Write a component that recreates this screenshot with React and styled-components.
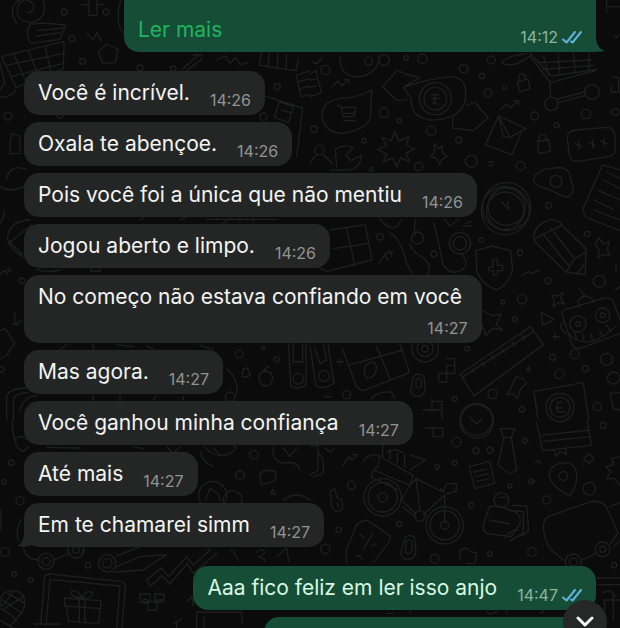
import React from 'react';
import styled, { createGlobalStyle, css } from 'styled-components';

const GlobalStyle = createGlobalStyle`
  * {
    box-sizing: border-box;
  }

  body {
    margin: 0;
    background-color: #0b0b0b;
    font-family: Inter, 'Liberation Sans', sans-serif;
  }
`;

const Screen = styled.main`
  position: relative;
  display: flex;
  flex-direction: column;
  height: 100vh;
  overflow: hidden;
  background-color: #0b0b0b;
`;

const WallpaperArt = styled.svg`
  position: absolute;
  inset: 0;
  width: 100%;
  height: 100%;
  fill: none;
  stroke: #1e1f1f;
  stroke-width: 4;
  stroke-linecap: round;
  stroke-linejoin: round;
`;

const MessageList = styled.ol`
  position: relative;
  flex: 1;
  display: flex;
  flex-direction: column;
  align-items: flex-start;
  gap: 7px;
  margin: 0;
  padding: 0 24px;
  list-style: none;
`;

const outgoing = css`
  align-self: flex-end;
  max-width: calc(100% - 100px);
  background-color: #154d37;
  color: #d8f8e3;
`;

const Bubble = styled.li`
  position: relative;
  flex-shrink: 0;
  display: flex;
  flex-wrap: wrap;
  align-items: flex-end;
  gap: 4px 20px;
  max-width: 80%;
  padding: 8px 14px 5px;
  border-radius: 15px;
  background-color: #242626;
  color: #f3f4f4;
  ${({ $out }) => $out && outgoing}
  ${({ $groupEnd }) => $groupEnd && 'margin-bottom: 12px;'}
`;

// long message whose beginning is scrolled out of view
const CutTopBubble = styled(Bubble)`
  width: 100%;
  padding-top: 16px;
  border-radius: 0 0 0 15px;
`;

const CutBottomBubble = styled(Bubble)`
  width: 58%;
  min-height: 44px;
`;

const Text = styled.span`
  padding-bottom: 3px;
  font-size: 21px;
  line-height: 28px;
`;

const ReadMore = styled.button`
  margin: 0;
  padding: 0 0 3px;
  border: 0;
  background: none;
  color: #21b45f;
  font-family: inherit;
  font-size: 21px;
  line-height: 28px;
  cursor: pointer;
`;

const Meta = styled.span`
  display: flex;
  align-items: center;
  gap: 4px;
  margin-left: auto;
  color: ${({ $out }) => ($out ? '#8db5a1' : '#929494')};
  font-size: 16px;
  line-height: 20px;
`;

const Ticks = styled.svg`
  width: 20px;
  height: 14px;
  fill: none;
  stroke: #62b4dc;
  stroke-width: 2;
  stroke-linecap: round;
  stroke-linejoin: round;
`;

const Tail = styled.svg`
  position: absolute;
  bottom: 0;
  width: 18px;
  height: 16px;
  ${({ $out }) => ($out ? 'right: -9px; fill: #154d37;' : 'left: -7px; fill: #242626;')}
`;

const ScrollButton = styled.button`
  position: absolute;
  right: 13px;
  bottom: -16px;
  display: flex;
  justify-content: center;
  align-items: center;
  width: 44px;
  height: 44px;
  padding: 0;
  border: 0;
  border-radius: 50%;
  background-color: #262727;
  cursor: pointer;
`;

const Chevron = styled.svg`
  width: 20px;
  height: 12px;
  fill: none;
  stroke: #f5f5f5;
  stroke-width: 3;
  stroke-linecap: round;
  stroke-linejoin: round;
`;

const messages = [
  { text: 'Você é incrível.', time: '14:26' },
  { text: 'Oxala te abençoe.', time: '14:26' },
  { text: 'Pois você foi a única que não mentiu', time: '14:26' },
  { text: 'Jogou aberto e limpo.', time: '14:26' },
  { text: 'No começo não estava confiando em você', time: '14:27' },
  { text: 'Mas agora.', time: '14:27' },
  { text: 'Você ganhou minha confiança', time: '14:27' },
  { text: 'Até mais', time: '14:27' },
  { text: 'Em te chamarei simm', time: '14:27', last: true },
];

// The wallpaper is six tiles, each drawn at three times its size.
// dots: [cx, cy, r]
const tiles = [
  {
    x: 0,
    y: 0,
    dots: [[193, 36, 9], [318, 36, 9], [248, 184, 9], [24, 348, 12], [420, 204, 9], [520, 206, 8], [832, 260, 9], [790, 350, 11], [180, 346, 9], [216, 116, 9]],
    lines: [
      'M50 70Q20 20 60 0M130 0Q145 60 90 68Q40 60 55 15Q75 -15 100 12Q105 38 80 38',
      'M245 14h22v-18M267 14v32h24v-46M291 14h20',
      'M92 72Q72 100 92 130L180 118L198 76Q140 66 92 72M110 92L190 84M110 108L184 98',
      'M5 170L48 262L190 206L192 124L5 170M40 160L80 250M85 150L118 236M135 138L154 222M18 196L192 160M34 230L190 190',
      'M0 190L14 250L0 270M48 270Q20 300 0 290',
      'M295 155L320 132L354 148L346 188L308 190Z',
      'M545 210L596 164M556 216L606 176M580 165h26',
      'M650 180L676 168L690 190L708 172L720 194L742 188',
      'M784 158L778 196L888 212L896 176M808 160L804 198M834 160L832 204M860 164L858 208',
      'M888 226L930 212M888 226L904 290L930 284M894 246L930 236M900 266L930 258',
      'M800 290L908 324L890 470M838 306L880 320L866 368L824 352ZM844 330L872 338',
      'M36 400L60 410V460L30 462V424ZM20 536Q30 490 80 508M0 560Q30 580 70 560',
      'M262 100L280 120L290 98L304 122',
      'M362 0Q340 80 380 110',
    ],
  },
  {
    x: 310,
    y: 0,
    dots: [[46, 210, 14], [176, 184, 12], [222, 180, 16], [288, 174, 7], [337, 176, 14], [461, 206, 13], [516, 228, 8], [544, 180, 12], [534, 278, 12], [584, 262, 6], [222, 338, 14], [268, 362, 7], [674, 348, 12], [740, 376, 8], [828, 342, 14], [162, 422, 7], [364, 392, 14], [446, 420, 9], [484, 484, 18], [326, 500, 12], [632, 498, 13], [184, 508, 6], [716, 616, 9], [12, 388, 10], [376, 296, 48], [376, 296, 34], [846, 276, 22], [724, 312, 20], [738, 544, 18], [28, 450, 14], [590, 620, 72], [590, 620, 56], [916, 336, 10]],
    lines: [
      'M90 168Q88 234 150 230Q206 220 208 168M10 186Q20 200 36 172',
      'M0 222L18 212L34 278L0 290M0 240L16 238M0 262L18 258',
      'M66 260L84 242L94 258L114 238M102 238H116V250',
      'M185 270L182 344Q180 386 100 400Q44 400 36 350Q34 304 90 296Q150 292 185 270Z',
      'M82 316L94 320L100 350H132L138 322H98M102 362H136M104 340H132',
      'M280 262L330 232L286 222L262 210L218 260L262 302L290 298M280 262L304 296Q300 352 360 360Q440 362 464 310Q480 230 420 230Q360 236 280 262',
      'M428 352V384L490 392L535 354L494 306L472 316M366 284H388M366 296H388M368 308L384 312M374 284V310',
      'M575 188Q590 200 624 190L660 168L720 248L856 212M575 188Q590 168 650 160M660 160L724 228L862 208M700 166L716 226M744 162L750 222M790 160L796 216M838 160L836 208M684 188L844 180M700 208L850 196M720 252L722 292M744 308L826 286M740 298L822 276',
      'M622 246L654 236L660 266L628 276ZM628 242Q622 220 638 222Q648 224 646 236',
      'M572 330L590 312L602 324L624 304M610 302H626V316',
      'M566 348L526 434L606 464L632 402M566 348L648 386L600 412L566 348M566 348L580 410L600 412',
      'M682 424L716 420L722 454L686 460ZM688 422Q684 402 698 404Q710 404 708 420',
      'M772 418Q770 394 794 390L890 382Q912 382 914 404L916 446Q916 468 894 470L806 484Q780 486 778 462ZM794 430L816 440M806 422V448M836 426L856 436M848 420V444M872 422L892 432M882 414V440',
      'M254 394L266 424L296 410L288 436L314 446L288 460L298 484L272 474L260 500L248 474L220 486L230 462L202 448L230 436L216 412L244 422Z',
      'M372 432L386 446L396 438L398 460L412 470L396 478L390 494L378 474L362 470L374 458Z',
      'M40 464L68 490M76 450Q96 430 130 442L108 466L122 482L154 466Q152 504 116 510H62M76 450L80 500M0 488L20 464',
      'M674 530Q688 506 724 506Q760 496 776 516Q784 540 790 570Q780 600 752 586Q716 566 690 560Q664 550 674 530Z',
      'M930 510L878 494L818 628M890 516L930 536M880 540L930 566M866 572L930 600M852 600L910 628',
      'M536 486H550M536 496H550M890 0V40M890 20H930M912 108L920 112L926 106M904 260V276H926V232H908',
      'M574 606L598 626M594 604V628',
    ],
  },
  {
    x: 0,
    y: 210,
    dots: [[28, 180, 5], [66, 212, 8], [718, 432, 12], [830, 448, 8], [790, 414, 5], [895, 506, 16], [4, 478, 8], [690, 560, 14]],
    lines: [
      'M0 40Q14 20 12 0M90 30Q30 30 22 84Q30 120 70 140M95 44L30 96L66 132',
      'M0 190L14 182L24 194',
      'M44 310V342L66 332M38 344H56',
      'M0 362L16 356L44 400L18 438L0 446',
      'M110 178Q140 190 180 180M272 176V184H300V176M420 30L430 24M620 28H830M670 40L690 24M720 36V26M760 36V26M540 30L560 20',
      'M200 404L180 420M278 404L282 420M350 404L400 410M440 408L460 418M600 406L640 418',
      'M20 630V560Q24 536 80 534M40 630V570Q44 550 84 548M60 600Q70 560 110 556M280 556V570M360 556V572M470 556L460 570M550 560V568',
      'M726 500L730 476L742 474L752 494Q738 504 726 500M790 484Q774 490 778 512Q788 532 800 528Q818 522 818 500Q812 482 790 484Q796 472 806 470',
      'M866 400L872 528Q890 540 918 526V402M880 404V456H908V404',
      'M680 476Q720 510 708 560',
    ],
  },
  {
    x: 310,
    y: 210,
    dots: [[210, 80, 10], [372, 132, 9], [450, 100, 32], [450, 100, 20], [514, 90, 7], [630, 128, 8], [832, 72, 8], [868, 214, 18], [714, 212, 9], [578, 276, 6], [636, 268, 14], [614, 328, 7], [728, 442, 9], [748, 492, 14], [826, 476, 9], [548, 552, 14], [636, 598, 8], [890, 448, 18], [910, 504, 18], [862, 590, 12], [794, 432, 14], [472, 416, 7], [345, 416, 40], [345, 416, 24], [345, 416, 10], [110, 554, 12], [434, 566, 7], [42, 498, 16], [750, 592, 42], [750, 592, 30], [500, 628, 48], [804, 342, 24], [878, 316, 22], [804, 342, 7], [878, 316, 7], [322, 84, 18], [586, 2, 72], [586, 2, 56]],
    lines: [
      'M60 60L166 44L186 150L50 184M70 116L176 100M110 54L134 166M20 170L50 184',
      'M206 160L224 136L234 150M222 132L250 124M238 118L246 140',
      'M208 24Q250 80 274 30M240 70Q270 80 290 160L306 192M318 26Q310 60 316 76M300 100Q300 120 340 144Q370 170 350 196M372 40Q380 70 398 160Q420 200 456 180Q480 160 456 134M404 26L420 48L446 28M460 48H484M468 40L484 34',
      'M498 122L546 108L602 122L608 180Q590 230 560 240Q510 220 500 180ZM536 172H548V148H562V166H578V182H564V196H550V182H536Z',
      'M672 72Q680 40 724 28Q748 30 756 46L828 116L826 194L768 186L674 94ZM700 72L776 168M722 54L794 146M768 186L794 146L828 126M672 90L700 72L756 46M800 192L826 160',
      'M636 196L656 184L664 190L690 180',
      'M866 84L882 102L898 94L892 116L900 136L880 134L864 142L868 120L856 106Z',
      'M726 256L742 258L760 246L752 266L764 282L744 278L730 290L732 272Z',
      'M694 306L732 328L698 346Z',
      'M520 302L546 318L574 312L558 342L578 360L548 354L528 376L516 346',
      'M818 0L828 22L930 62M850 0L930 30M918 162V184M930 230L918 238',
      'M756 312Q750 300 776 296L884 264Q906 262 912 280L930 330M756 312L786 404Q796 420 816 414L930 370M806 290Q800 260 828 258Q846 260 850 276M808 236L824 256M776 370Q830 430 916 350M792 364L800 384M816 370L822 390M842 370L848 390M868 360L878 378M890 346L902 364M758 340Q742 350 768 370',
      'M450 492L662 350L700 404L492 558ZM456 502L672 364M486 478L494 488M516 458L524 468M546 438L554 448M576 418L584 428M606 396L614 408M636 376L644 388',
      'M600 540L618 500L638 506L650 520L632 536L622 566L608 550L590 554ZM650 480L656 470L660 484Z',
      'M672 544L820 518L836 628M672 544L684 628M758 578Q742 570 742 590V606H764M736 594H756',
      'M96 414L140 530Q150 544 166 540L294 490Q300 480 290 464L270 404M112 466L280 420M200 410L240 506M170 504Q150 470 184 456Q206 460 196 490Q186 506 170 504',
      'M0 408L18 528Q40 540 72 520L54 402M14 414L30 460L50 450L40 404M80 456H100M90 446V466',
      'M410 446H434V490H386V516H410V466M386 490H410M412 466H434M366 574H396V628M366 574V600H396M340 600H366',
      'M310 500Q326 484 342 500L346 540Q340 564 314 558Q296 550 304 534ZM318 508Q328 500 334 510V530Q324 540 318 528Z',
      'M184 566Q200 544 244 546L254 566M44 560H66',
      'M900 550L930 548M900 550L910 596L930 600M728 380H750M736 372V388',
    ],
  },
  {
    x: 0,
    y: 420,
    dots: [[34, 128, 8], [12, 186, 7], [60, 242, 12], [14, 396, 13], [42, 462, 7], [92, 480, 7], [264, 436, 8], [138, 424, 24], [138, 424, 12], [228, 390, 24], [228, 390, 10], [322, 430, 26], [322, 430, 14], [720, 166, 13], [762, 104, 13], [638, 226, 42], [698, 240, 28], [436, 544, 7]],
    lines: [
      'M36 0Q40 90 70 94L86 80M44 60Q60 40 84 60M140 82L240 84M400 80L430 86M500 80L520 100L540 80',
      'M604 96Q600 120 640 140M612 80Q650 120 690 100Q720 80 700 78M640 84L660 104M822 80Q810 120 850 130Q890 120 900 150M850 84L870 110L890 84',
      'M780 160Q800 144 828 156L826 180Q800 196 782 190ZM812 222L818 208L826 222ZM616 240L630 206L656 222L660 240M850 240Q890 210 930 240',
      'M0 270Q8 300 0 330M64 300Q44 330 56 364M70 384Q80 420 118 420M160 420L210 400M246 404L252 380M350 408L420 380M350 440L420 410L500 404L430 450L340 456',
      'M444 486L450 500L486 466L510 492L562 430L580 460L650 400M440 480L484 444L506 470L560 410L580 436L632 388',
      'M122 612L134 470Q138 462 150 462L360 484Q376 486 376 500L366 624M138 616L150 478L360 498L350 624M100 612H180',
      'M194 534L302 542V566L194 558ZM200 562L206 604L296 610L300 568M238 536V606M254 538V608M246 534Q206 530 216 512Q236 510 246 534Q254 508 278 518Q280 536 246 534',
      'M420 522H450V546H420ZM464 522H492V540H464ZM430 546H492M444 550V570H470V550',
      'M4 530Q20 506 54 514Q84 530 70 570L48 600Q30 580 8 570Q0 560 4 530M8 540L66 580M24 520L74 550M14 566L70 530M40 514L10 556M0 600L40 624M50 600Q30 610 30 624',
      'M770 396Q790 380 794 400L776 412Q800 416 792 426M830 410L860 384L866 424M690 390Q710 400 714 424',
      'M520 612L546 596M530 624V604M590 576H726V612M590 576V624M612 590V624M560 544L576 530L580 556',
    ],
  },
  {
    x: 310,
    y: 420,
    dots: [[440, 66, 14], [498, 92, 9], [540, 90, 9], [880, 16, 9], [434, 128, 7], [838, 206, 19], [760, 168, 13], [710, 240, 12], [600, 198, 6], [484, 256, 8], [124, 196, 12], [268, 312, 8], [86, 330, 8], [46, 386, 14], [374, 416, 13], [540, 402, 7], [666, 396, 13], [912, 436, 8], [218, 232, 56], [218, 232, 44], [218, 232, 14], [404, 316, 56], [404, 316, 44], [404, 316, 12], [878, 388, 22], [878, 388, 9], [790, 426, 24], [790, 426, 12], [574, 240, 22], [330, 288, 16], [500, 4, 50]],
    lines: [
      'M346 24H398V50H370V24M478 -10L500 12L518 -6',
      'M0 80L24 76V150L0 166M24 100Q44 110 40 160L10 170M44 84L60 96L72 86',
      'M98 138L116 110L126 120L142 106M126 104H142',
      'M160 126Q170 100 208 106L204 140L190 150L300 196L310 166L206 108M190 150L184 172L262 208M218 110V70M240 118V90M262 130V100M284 140V104M300 150L346 120L300 104M232 96L254 88L280 98',
      'M270 246L300 196L318 176L398 216M318 176L330 272M340 284L404 226V310M272 238L316 280M276 260L318 292M398 216L410 192L440 190L438 214L410 222M392 206L404 216',
      'M374 136L382 132L390 142L380 150Z',
      'M570 26H614L604 52H582ZM582 52L564 136L600 162L620 150L604 52',
      'M636 62L646 54L654 62L646 70ZM676 126L686 122L692 132M654 188L662 176L674 184L666 192Z',
      'M478 140L540 124L554 190L494 206ZM492 156L528 148M496 170L534 162M500 184L538 176',
      'M680 8L698 92L844 76L832 0M696 46L838 30M700 64L842 50M732 88L738 108L752 94L770 104L766 84',
      'M768 128Q720 130 718 166Q724 200 780 228Q804 190 800 160Q794 130 768 128',
      'M820 116L838 102L852 116L838 130ZM930 110L904 116L912 134L888 140L902 156L890 176L914 176L930 196',
      'M60 214L74 206L80 230L94 240Q106 266 84 276Q62 270 64 246ZM82 250L86 260',
      'M170 300L240 346Q244 356 234 370L190 428M170 300Q140 304 134 330L108 390L110 428M150 344L162 352M190 340L160 386M184 378L198 372M140 410Q150 400 158 420',
      'M286 352Q300 340 314 352L318 396Q310 424 282 416Q268 404 276 384ZM290 362Q302 356 306 364V394Q294 408 286 396Z',
      'M448 422L452 388L470 384L484 396L500 398L496 424M470 430H496',
      'M538 260Q560 252 620 278Q634 290 630 310L604 350L530 340Q514 330 522 310ZM608 256L650 258L656 330Q650 344 620 350M600 272L640 274L640 340L600 362M540 300L600 312M584 354Q600 330 626 330M570 232H588',
      'M700 314Q704 294 720 288L846 244Q870 242 888 258L924 340L900 372M700 314Q700 360 724 390L760 420M818 420L856 400M900 260L930 248M910 380L930 362',
      'M862 474H930M862 494H930M880 520Q900 500 918 530M880 540H930M910 520V600M884 540V600',
      'M230 580H250M300 574V582M530 574Q540 590 560 574M590 574V582M690 580L700 574',
    ],
  },
];

const Wallpaper = () => (
  <WallpaperArt viewBox="0 0 620 628" preserveAspectRatio="xMidYMin slice" aria-hidden="true">
    {tiles.map((tile) => (
      <g key={`${tile.x}-${tile.y}`} transform={`translate(${tile.x} ${tile.y}) scale(0.3333)`}>
        {tile.dots.map(([cx, cy, r]) => (
          <circle key={`${cx}-${cy}-${r}`} cx={cx} cy={cy} r={r} />
        ))}
        {tile.lines.map((d) => (
          <path key={d} d={d} />
        ))}
      </g>
    ))}
  </WallpaperArt>
);

const ReadTicks = () => (
  <Ticks viewBox="0 0 20 14" role="img" aria-label="Lida">
    <path d="M1 9.5L4.5 12.5L13 2" />
    <path d="M9 11.5L10.5 12.5L19 2" />
  </Ticks>
);

const App = () => {
  return (
    <>
      <GlobalStyle />
      <Screen>
        <Wallpaper />
        <MessageList>
          <CutTopBubble $out $groupEnd>
            <ReadMore type="button">Ler mais</ReadMore>
            <Meta $out>
              <time>14:12</time>
              <ReadTicks />
            </Meta>
            <Tail $out viewBox="0 0 18 16" aria-hidden="true">
              <path d="M0 0H9C9 8 12 13 18 15Q10 17 3 14Z" />
            </Tail>
          </CutTopBubble>
          {messages.map(({ text, time, last }) => (
            <Bubble key={text} $groupEnd={last}>
              <Text>{text}</Text>
              <Meta>
                <time>{time}</time>
              </Meta>
              {last && (
                <Tail viewBox="0 0 18 16" aria-hidden="true">
                  <path d="M18 0H7C7 8 5 13 0 15Q8 17 15 14Z" />
                </Tail>
              )}
            </Bubble>
          ))}
          <Bubble $out>
            <Text>Aaa fico feliz em ler isso anjo</Text>
            <Meta $out>
              <time>14:47</time>
              <ReadTicks />
            </Meta>
          </Bubble>
          <CutBottomBubble $out />
        </MessageList>
        <ScrollButton type="button" aria-label="Ir para o fim da conversa">
          <Chevron viewBox="0 0 20 12" aria-hidden="true">
            <path d="M3 2L10 9L17 2" />
          </Chevron>
        </ScrollButton>
      </Screen>
    </>
  );
};

export default App;
